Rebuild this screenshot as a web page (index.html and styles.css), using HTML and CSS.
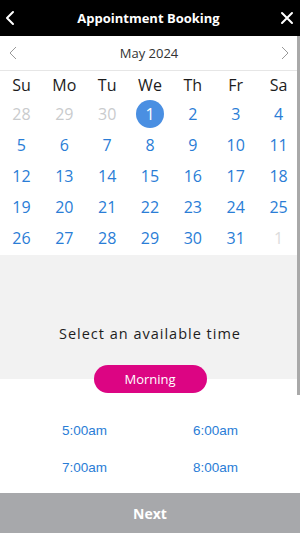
FILE: index.html
```html
<!DOCTYPE html>
<html lang="en">
<head>
  <meta charset="UTF-8" />
  <title>Appointment Booking</title>
  <meta name="viewport" content="width=device-width, initial-scale=1.0" />
  <link rel="stylesheet" href="styles.css">
</head>
<body>

  <header class="topbar">
    <button class="icon-btn" aria-label="Back">
      <svg width="10" height="16" viewBox="0 0 10 16"><path d="M8 2 L2 8 L8 14" fill="none" stroke="#fff" stroke-width="2" stroke-linecap="round" stroke-linejoin="round"/></svg>
    </button>
    <h1 class="topbar-title">Appointment Booking</h1>
    <button class="icon-btn" aria-label="Close">
      <svg width="14" height="14" viewBox="0 0 14 14"><path d="M2 2 L12 12 M12 2 L2 12" fill="none" stroke="#fff" stroke-width="2" stroke-linecap="round"/></svg>
    </button>
  </header>

  <main class="scroll">
    <!-- scroll thumb -->
    <div class="scroll-thumb"></div>

    <div class="month-bar">
      <button class="icon-btn" aria-label="Previous month">
        <svg width="8" height="14" viewBox="0 0 8 14"><path d="M7 1 L1 7 L7 13" fill="none" stroke="#999" stroke-width="1"/></svg>
      </button>
      <span class="month-name">May 2024</span>
      <button class="icon-btn" aria-label="Next month">
        <svg width="8" height="14" viewBox="0 0 8 14"><path d="M1 1 L7 7 L1 13" fill="none" stroke="#999" stroke-width="1"/></svg>
      </button>
    </div>

    <div class="calendar">
      <div class="wd">Su</div><div class="wd">Mo</div><div class="wd">Tu</div><div class="wd">We</div><div class="wd">Th</div><div class="wd">Fr</div><div class="wd">Sa</div>

      <div class="day other">28</div><div class="day other">29</div><div class="day other">30</div>
      <div class="day"><span class="selected">1</span></div>
      <div class="day">2</div><div class="day">3</div><div class="day">4</div>

      <div class="day">5</div><div class="day">6</div><div class="day">7</div><div class="day">8</div><div class="day">9</div><div class="day">10</div><div class="day">11</div>
      <div class="day">12</div><div class="day">13</div><div class="day">14</div><div class="day">15</div><div class="day">16</div><div class="day">17</div><div class="day">18</div>
      <div class="day">19</div><div class="day">20</div><div class="day">21</div><div class="day">22</div><div class="day">23</div><div class="day">24</div><div class="day">25</div>
      <div class="day">26</div><div class="day">27</div><div class="day">28</div><div class="day">29</div><div class="day">30</div><div class="day">31</div><div class="day other light">1</div>
    </div>

    <section class="time-select">
      <p class="time-prompt">Select an available time</p>
    </section>

    <div class="period">
      <button class="period-pill">Morning</button>
    </div>

    <div class="slots">
      <button class="slot">5:00am</button>
      <button class="slot">6:00am</button>
      <button class="slot">7:00am</button>
      <button class="slot">8:00am</button>
    </div>
  </main>

  <button class="next-btn">Next</button>

</body>
</html>
```

FILE: styles.css
```css
* { box-sizing: border-box; }
html, body { height: 100%; }
body {
  margin: 0;
  display: flex;
  flex-direction: column;
  height: 533px;
  background: #fff;
  font-family: "Open Sans", sans-serif;
  color: #222;
  overflow: hidden;
}
button {
  font: inherit;
  border: 0;
  background: none;
  padding: 0;
  cursor: pointer;
}

/* top bar */
.topbar {
  height: 36px;
  flex: none;
  background: #000;
  display: flex;
  align-items: center;
  justify-content: space-between;
  padding: 0 5px 0 2px;
}
.topbar-title {
  margin: 0;
  color: #fff;
  font-size: 13px;
  font-weight: 700;
}
.icon-btn {
  display: flex;
  align-items: center;
  justify-content: center;
  width: 16px;
  height: 20px;
}

/* scroll area */
.scroll {
  flex: 1;
  overflow: hidden;
  position: relative;
}
.scroll-thumb {
  position: absolute;
  top: 0;
  right: 0;
  width: 3px;
  height: 359px;
  background: #a9a9a9;
}

.month-bar {
  height: 35px;
  display: flex;
  align-items: center;
  justify-content: space-between;
  padding: 0 7px 0 5px;
  border-bottom: 1px solid #e6e6e6;
}
.month-name {
  font-size: 13px;
  color: #333;
}

/* calendar */
.calendar {
  display: grid;
  grid-template-columns: repeat(7, 1fr);
  grid-auto-rows: 31.2px;
  grid-template-rows: 27px;
  padding-bottom: 1px;
}
.wd, .day {
  display: flex;
  align-items: center;
  justify-content: center;
  font-size: 16px;
}
.wd { color: #1c1c1c; }
.day { color: #2a7dd6; }
.day.other { color: #c9cbcd; }
.day.light { color: #dcdcdc; }
.selected {
  width: 28px;
  height: 28px;
  border-radius: 50%;
  background: #4a8fe2;
  color: #fff;
  display: flex;
  align-items: center;
  justify-content: center;
}

/* time selection */
.time-select {
  background: #f2f2f2;
  padding: 69px 0 21px;
}
.time-prompt {
  margin: 0;
  text-align: center;
  font-size: 14.5px;
  line-height: 20px;
  letter-spacing: 1px;
  color: #1e1e1e;
}
.period {
  display: flex;
  justify-content: center;
  background: linear-gradient(#f2f2f2 50%, #fff 50%);
}
.period-pill {
  width: 113px;
  height: 28px;
  border-radius: 14px;
  background: #dc0583;
  color: #fff;
  font-size: 13px;
}

.slots {
  display: grid;
  grid-template-columns: 1fr 1fr;
  grid-auto-rows: 37px;
  padding: 19px 19px 0;
}
.slot {
  font-family: "Liberation Sans", Arial, sans-serif;
  font-size: 13.5px;
  color: #2a7dd6;
}

/* bottom action */
.next-btn {
  flex: none;
  height: 40px;
  width: 100%;
  background: #a7a8ab;
  color: #fff;
  font-weight: 700;
  font-size: 14px;
}
```
